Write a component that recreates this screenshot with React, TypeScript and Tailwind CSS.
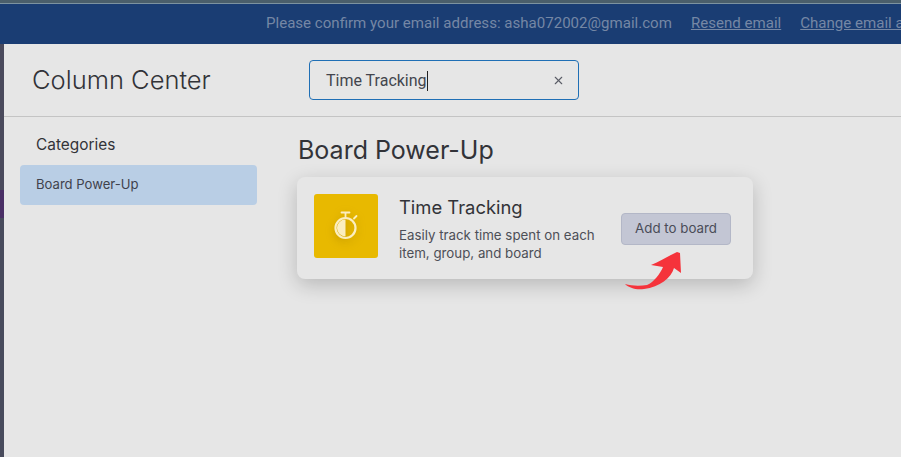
import { X } from "lucide-react";

const bodyFont = "font-['Inter','Noto_Sans',sans-serif]";

function StopwatchIcon() {
  return (
    <svg width="26" height="32" viewBox="0 0 26 32" fill="none" className="drop-shadow-[0_3px_4px_rgba(150,110,0,0.35)]">
      <path d="M8.5 2.5h8M12.5 2.5v5M21 8.5l2.5-2.5" stroke="#fbeec0" strokeWidth="1.8" strokeLinecap="round" />
      <circle cx="12.5" cy="18" r="10" stroke="#fbeec0" strokeWidth="2.2" />
      <path d="M12.5 9.5a8.5 8.5 0 0 0 0 17z" fill="#fbeec0" />
    </svg>
  );
}

function CurvedArrow() {
  return (
    <svg width="60" height="40" viewBox="0 0 60 40" className="absolute left-[622px] top-[250px]">
      <path
        d="M3 34C10 36 18 36 25 35C32 32 38 24 41 17L29 15C37 12 46 6 55 2L58 3L59 23L52 18C49 28 38 37 22 39C14 40 7 38 3 34Z"
        fill="#f5333b"
      />
    </svg>
  );
}

export default function App() {
  return (
    <div className={`relative flex h-[457px] w-[901px] flex-col overflow-hidden bg-[#e6e6e6] ${bodyFont}`}>
      <div className="h-[4px] shrink-0 border-b border-[#7d93a0] bg-[#4b5f6b]" />
      <div className="flex h-[40px] shrink-0 items-center gap-[19px] overflow-hidden whitespace-nowrap bg-[#1a3d73] pb-[2px] pl-[266px] font-['Roboto',sans-serif] text-[15.07px] text-[#7587a5]">
        <span>Please confirm your email address: asha072002@gmail.com</span>
        <span className="underline">Resend email</span>
        <span className="underline">Change email address</span>
      </div>
      <div className="flex min-h-0 flex-1">
        <div className="flex w-[4px] shrink-0 flex-col">
          <div className="h-[146px] bg-[#4a4a5c]" />
          <div className="h-[28px] bg-[#4a2f66]" />
          <div className="flex-1 bg-[#484b5c]" />
        </div>
        <div className="flex min-w-0 flex-1 flex-col rounded-tl-[16px] bg-[#e6e6e6]">
          <header className="flex h-[73px] shrink-0 items-center border-b border-[#c4c4c4]">
            <h1 className="w-[305px] pl-[28px] font-['Inter',sans-serif] text-[25.5px] font-light text-[#323338]">
              Column Center
            </h1>
            <div className="flex h-[40px] w-[270px] items-center justify-between rounded-[4px] border border-[#1f6fb5] pl-[16px] pr-[13px]">
              <span className="flex items-center pt-[2px] font-['Roboto',sans-serif] text-[16px] text-[#43454d]">
                Time Tracking
                <span className="h-[20px] w-px bg-[#222222]" />
              </span>
              <X size={13} strokeWidth={2} className="text-[#5a5c66]" />
            </div>
          </header>
          <div className="flex min-h-0 flex-1">
            <aside className="w-[253px] shrink-0 pl-[16px]">
              <p className="mt-[19px] pl-[16px] text-[15.4px] leading-[18px] text-[#323338]">Categories</p>
              <div className="mt-[11px] flex h-[40px] w-[237px] items-center rounded-[4px] bg-[#b9cee5] pl-[16px] text-[13.1px] text-[#3f424c]">
                Board Power-Up
              </div>
            </aside>
            <main className="min-w-0 flex-1 pl-[41px]">
              <h2 className="mt-[17px] text-[25px] font-normal leading-[32px] text-[#323338]">Board Power-Up</h2>
              <section className="-ml-px mt-[11px] flex h-[102px] w-[456px] rounded-[8px] bg-[#e6e6e6] pl-[17px] shadow-[0_6px_20px_rgba(0,0,0,0.2)]">
                <div className="mt-[17px] flex h-[64px] w-[64px] shrink-0 items-center justify-center rounded-[3px] bg-[#e8b900]">
                  <StopwatchIcon />
                </div>
                <div className="ml-[21px] mt-[18px] w-[208px] shrink-0">
                  <h3 className="text-[18.4px] font-normal leading-[24px] text-[#323338]">Time Tracking</h3>
                  <p className="mt-[7px] text-[13.3px] leading-[18px] text-[#4d4f57]">
                    Easily track time spent on each item, group, and board
                  </p>
                </div>
                <button
                  type="button"
                  className="ml-[14px] mt-[36px] flex h-[32px] w-[110px] shrink-0 items-center justify-center rounded-[4px] border border-[#b3b7c7] bg-[#c3c6d4] text-[13.3px] text-[#4a4c58]"
                >
                  Add to board
                </button>
              </section>
            </main>
          </div>
        </div>
      </div>
      <CurvedArrow />
    </div>
  );
}
